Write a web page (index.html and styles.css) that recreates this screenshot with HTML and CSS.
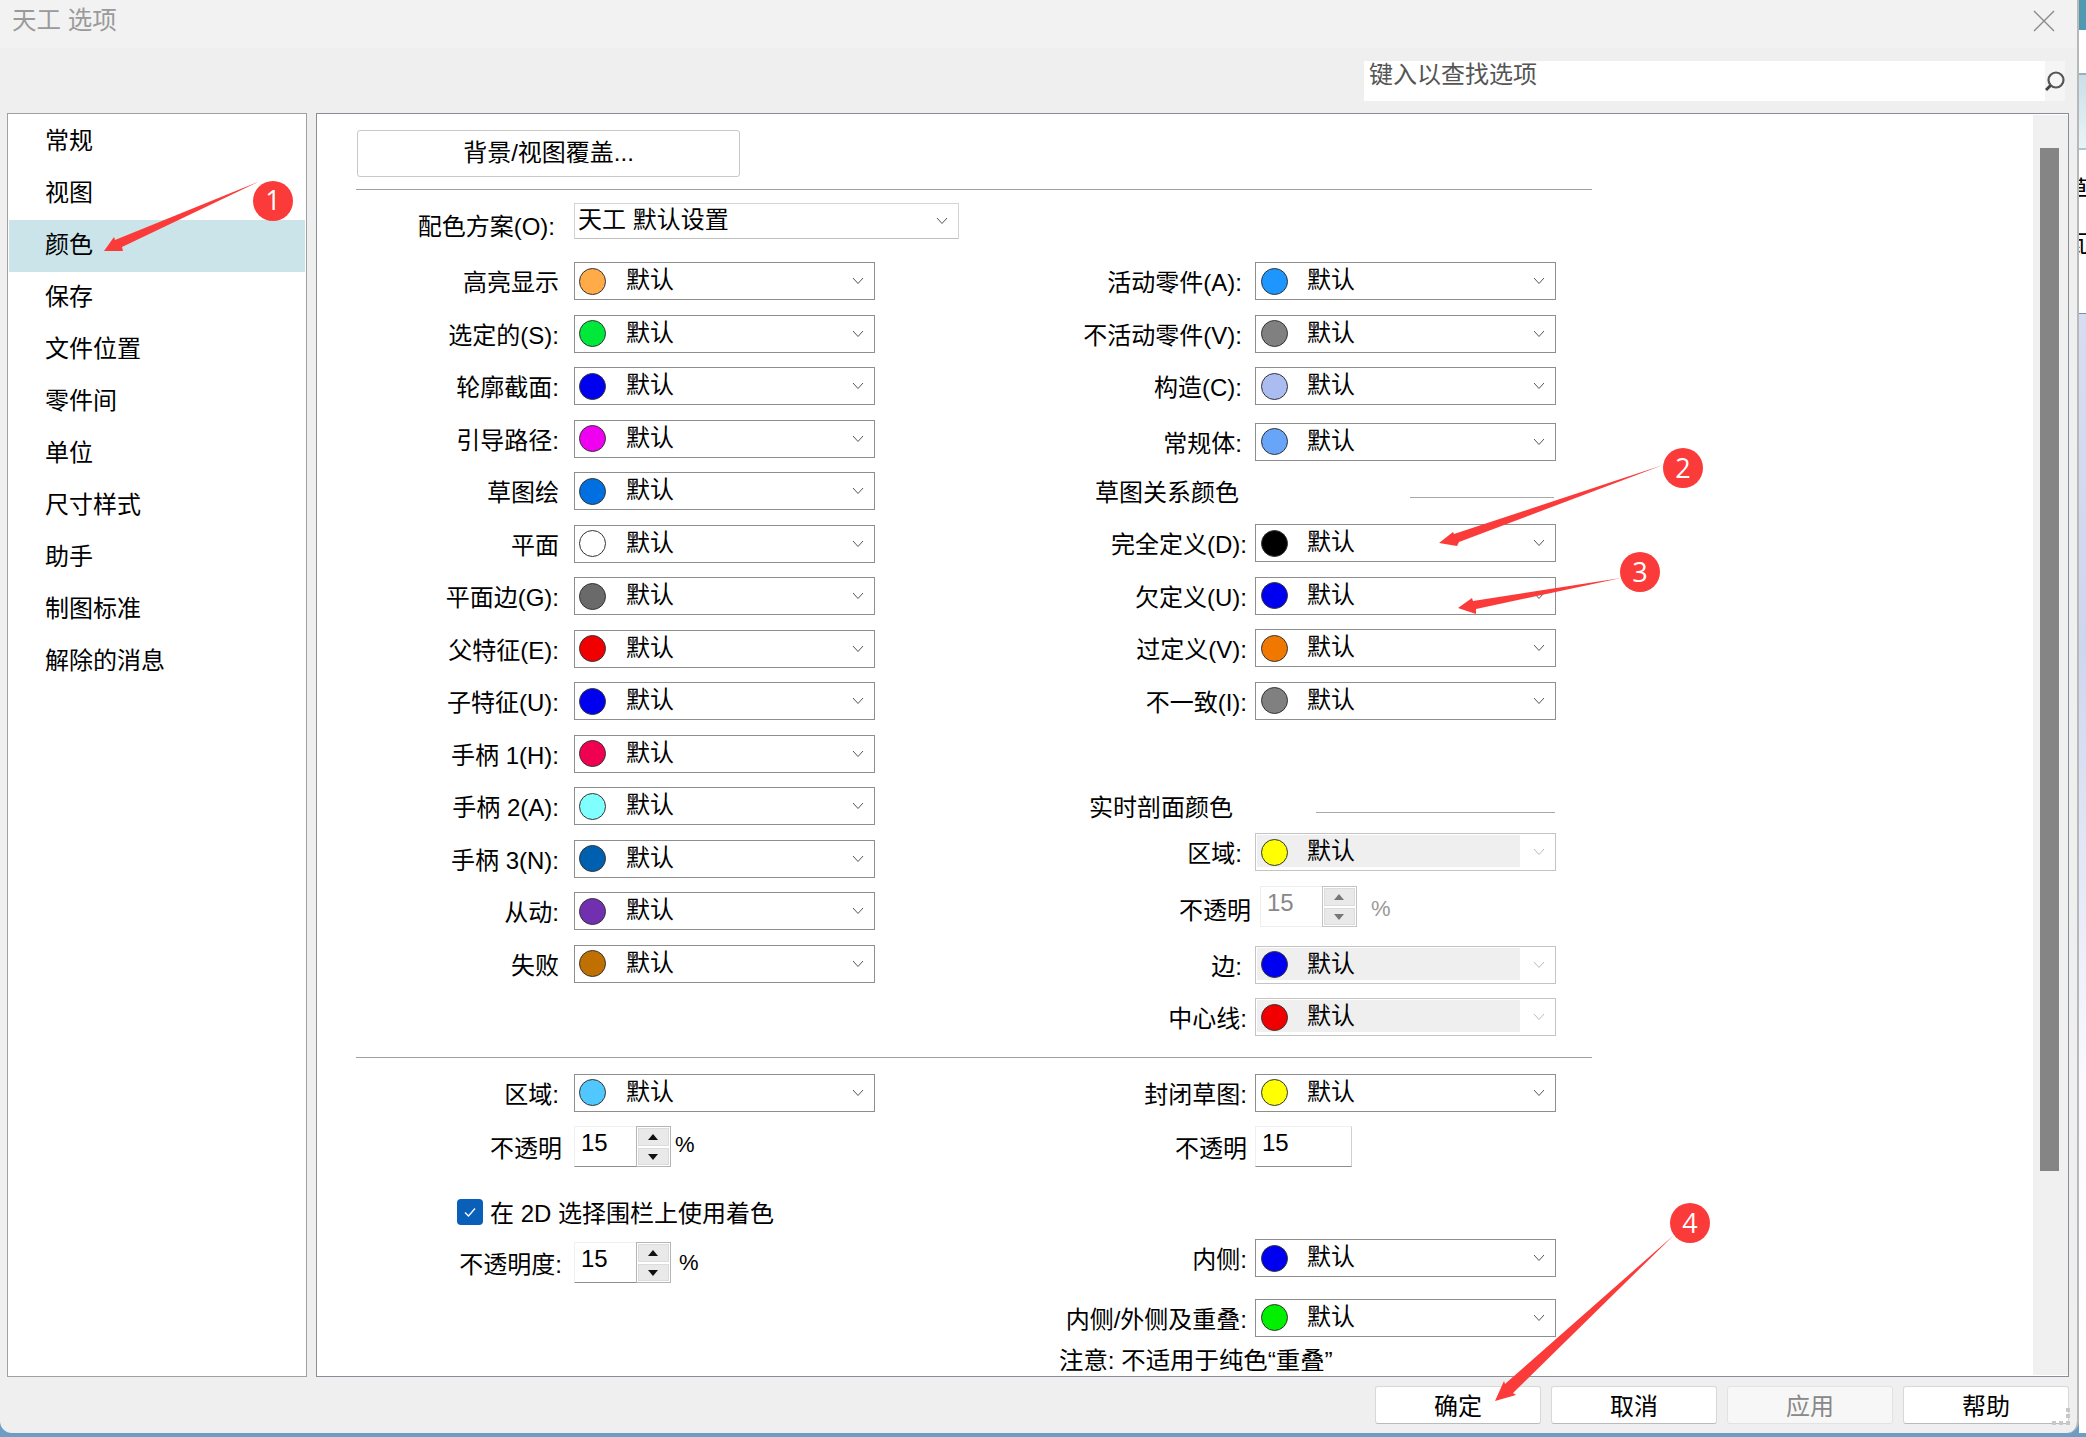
FILE: index.html
```html
<!DOCTYPE html>
<html lang="zh">
<head>
<meta charset="utf-8">
<title>天工 选项</title>
<link rel="stylesheet" href="styles.css">
</head>
<body>
<div class="desktop">
  <div class="dialog">
    <header class="titlebar">
      <span class="title">天工 选项</span>
      <svg class="close" viewBox="0 0 22 22" width="22" height="22"><path d="M1 1L21 21M21 1L1 21" stroke="#8a8a8a" stroke-width="1.4" fill="none"/></svg>
    </header>
    <div class="searchstrip">
      <div class="search">
        <span class="search-text">键入以查找选项</span>
        <span class="search-btn"><svg viewBox="0 0 20 24" width="20" height="24"><circle cx="11" cy="11" r="7.500" stroke="#555" stroke-width="2.200" fill="none"/><path d="M5.500 16.500L1 21" stroke="#444" stroke-width="3"/></svg></span>
      </div>
    </div>
    <div class="panels">
      <nav class="sidenav">
        <div class="nav-item">常规</div>
        <div class="nav-item">视图</div>
        <div class="nav-item active">颜色</div>
        <div class="nav-item">保存</div>
        <div class="nav-item">文件位置</div>
        <div class="nav-item">零件间</div>
        <div class="nav-item">单位</div>
        <div class="nav-item">尺寸样式</div>
        <div class="nav-item">助手</div>
        <div class="nav-item">制图标准</div>
        <div class="nav-item">解除的消息</div>
      </nav>
      <main class="content">
        <div class="form">
          <button class="btn-bg">背景/视图覆盖...</button>
          <hr class="rule rule-top">
          <div class="scheme-row">
            <span class="scheme-label">配色方案(O):</span>
            <div class="scheme-combo"><span>天工 默认设置</span><svg class="chev" viewBox="0 0 12 8" width="12" height="8"><path d="M1 1L6 6.500L11 1" stroke="#555" fill="none"/></svg></div>
          </div>
          <div class="cols">
            <div class="col col-left">
              <div class="row"><span class="label">高亮显示</span><div class="combo"><i class="dot" style="background:#ffab48"></i><b>默认</b><svg class="chev" viewBox="0 0 12 8" width="12" height="8"><path d="M1 1L6 6.500L11 1" stroke="#555" fill="none"/></svg></div></div>
              <div class="row"><span class="label">选定的(S):</span><div class="combo"><i class="dot" style="background:#00e83a"></i><b>默认</b><svg class="chev" viewBox="0 0 12 8" width="12" height="8"><path d="M1 1L6 6.500L11 1" stroke="#555" fill="none"/></svg></div></div>
              <div class="row"><span class="label">轮廓截面:</span><div class="combo"><i class="dot" style="background:#0000f0"></i><b>默认</b><svg class="chev" viewBox="0 0 12 8" width="12" height="8"><path d="M1 1L6 6.500L11 1" stroke="#555" fill="none"/></svg></div></div>
              <div class="row"><span class="label">引导路径:</span><div class="combo"><i class="dot" style="background:#f000f0"></i><b>默认</b><svg class="chev" viewBox="0 0 12 8" width="12" height="8"><path d="M1 1L6 6.500L11 1" stroke="#555" fill="none"/></svg></div></div>
              <div class="row"><span class="label">草图绘</span><div class="combo"><i class="dot" style="background:#0070e0"></i><b>默认</b><svg class="chev" viewBox="0 0 12 8" width="12" height="8"><path d="M1 1L6 6.500L11 1" stroke="#555" fill="none"/></svg></div></div>
              <div class="row"><span class="label">平面</span><div class="combo"><i class="dot" style="background:#ffffff"></i><b>默认</b><svg class="chev" viewBox="0 0 12 8" width="12" height="8"><path d="M1 1L6 6.500L11 1" stroke="#555" fill="none"/></svg></div></div>
              <div class="row"><span class="label">平面边(G):</span><div class="combo"><i class="dot" style="background:#6a6a6a"></i><b>默认</b><svg class="chev" viewBox="0 0 12 8" width="12" height="8"><path d="M1 1L6 6.500L11 1" stroke="#555" fill="none"/></svg></div></div>
              <div class="row"><span class="label">父特征(E):</span><div class="combo"><i class="dot" style="background:#f00000"></i><b>默认</b><svg class="chev" viewBox="0 0 12 8" width="12" height="8"><path d="M1 1L6 6.500L11 1" stroke="#555" fill="none"/></svg></div></div>
              <div class="row"><span class="label">子特征(U):</span><div class="combo"><i class="dot" style="background:#0000f0"></i><b>默认</b><svg class="chev" viewBox="0 0 12 8" width="12" height="8"><path d="M1 1L6 6.500L11 1" stroke="#555" fill="none"/></svg></div></div>
              <div class="row"><span class="label">手柄 1(H):</span><div class="combo"><i class="dot" style="background:#f00050"></i><b>默认</b><svg class="chev" viewBox="0 0 12 8" width="12" height="8"><path d="M1 1L6 6.500L11 1" stroke="#555" fill="none"/></svg></div></div>
              <div class="row"><span class="label">手柄 2(A):</span><div class="combo"><i class="dot" style="background:#80ffff"></i><b>默认</b><svg class="chev" viewBox="0 0 12 8" width="12" height="8"><path d="M1 1L6 6.500L11 1" stroke="#555" fill="none"/></svg></div></div>
              <div class="row"><span class="label">手柄 3(N):</span><div class="combo"><i class="dot" style="background:#0060b0"></i><b>默认</b><svg class="chev" viewBox="0 0 12 8" width="12" height="8"><path d="M1 1L6 6.500L11 1" stroke="#555" fill="none"/></svg></div></div>
              <div class="row"><span class="label">从动:</span><div class="combo"><i class="dot" style="background:#7030b0"></i><b>默认</b><svg class="chev" viewBox="0 0 12 8" width="12" height="8"><path d="M1 1L6 6.500L11 1" stroke="#555" fill="none"/></svg></div></div>
              <div class="row"><span class="label">失败</span><div class="combo"><i class="dot" style="background:#c07000"></i><b>默认</b><svg class="chev" viewBox="0 0 12 8" width="12" height="8"><path d="M1 1L6 6.500L11 1" stroke="#555" fill="none"/></svg></div></div>
            </div>
            <div class="col col-right">
              <div class="row"><span class="label">活动零件(A):</span><div class="combo"><i class="dot" style="background:#1e96ff"></i><b>默认</b><svg class="chev" viewBox="0 0 12 8" width="12" height="8"><path d="M1 1L6 6.500L11 1" stroke="#555" fill="none"/></svg></div></div>
              <div class="row"><span class="label">不活动零件(V):</span><div class="combo"><i class="dot" style="background:#808080"></i><b>默认</b><svg class="chev" viewBox="0 0 12 8" width="12" height="8"><path d="M1 1L6 6.500L11 1" stroke="#555" fill="none"/></svg></div></div>
              <div class="row"><span class="label">构造(C):</span><div class="combo"><i class="dot" style="background:#abbcf0"></i><b>默认</b><svg class="chev" viewBox="0 0 12 8" width="12" height="8"><path d="M1 1L6 6.500L11 1" stroke="#555" fill="none"/></svg></div></div>
              <div class="row row-solid"><span class="label">常规体:</span><div class="combo"><i class="dot" style="background:#68a4f8"></i><b>默认</b><svg class="chev" viewBox="0 0 12 8" width="12" height="8"><path d="M1 1L6 6.500L11 1" stroke="#555" fill="none"/></svg></div></div>
              <div class="section section-sketch"><span class="section-title">草图关系颜色</span><span class="section-line"></span></div>
              <div class="row"><span class="label label-wide">完全定义(D):</span><div class="combo"><i class="dot" style="background:#000"></i><b>默认</b><svg class="chev" viewBox="0 0 12 8" width="12" height="8"><path d="M1 1L6 6.500L11 1" stroke="#555" fill="none"/></svg></div></div>
              <div class="row"><span class="label label-wide">欠定义(U):</span><div class="combo"><i class="dot" style="background:#0000f0"></i><b>默认</b><svg class="chev" viewBox="0 0 12 8" width="12" height="8"><path d="M1 1L6 6.500L11 1" stroke="#555" fill="none"/></svg></div></div>
              <div class="row"><span class="label label-wide">过定义(V):</span><div class="combo"><i class="dot" style="background:#f07800"></i><b>默认</b><svg class="chev" viewBox="0 0 12 8" width="12" height="8"><path d="M1 1L6 6.500L11 1" stroke="#555" fill="none"/></svg></div></div>
              <div class="row"><span class="label label-wide">不一致(I):</span><div class="combo"><i class="dot" style="background:#808080"></i><b>默认</b><svg class="chev" viewBox="0 0 12 8" width="12" height="8"><path d="M1 1L6 6.500L11 1" stroke="#555" fill="none"/></svg></div></div>
              <div class="section section-live"><span class="section-title">实时剖面颜色</span><span class="section-line"></span></div>
              <div class="row"><span class="label">区域:</span><div class="combo off"><i class="dot" style="background:#ffff00"></i><b>默认</b><svg class="chev" viewBox="0 0 12 8" width="12" height="8"><path d="M1 1L6 6.500L11 1" stroke="#bbb" fill="none"/></svg></div></div>
              <div class="row row-spin-off"><span class="label label-wider">不透明</span><div class="spin spin-off"><span class="spin-val">15</span><span class="spin-btns"><span class="up"></span><span class="down"></span></span></div><span class="pct pct-off">%</span></div>
              <div class="row"><span class="label">边:</span><div class="combo off"><i class="dot" style="background:#0000f0"></i><b>默认</b><svg class="chev" viewBox="0 0 12 8" width="12" height="8"><path d="M1 1L6 6.500L11 1" stroke="#bbb" fill="none"/></svg></div></div>
              <div class="row"><span class="label label-wide">中心线:</span><div class="combo off"><i class="dot" style="background:#f00000"></i><b>默认</b><svg class="chev" viewBox="0 0 12 8" width="12" height="8"><path d="M1 1L6 6.500L11 1" stroke="#bbb" fill="none"/></svg></div></div>
            </div>
          </div>
          <hr class="rule rule-mid">
          <div class="cols cols-bottom">
            <div class="col col-left">
              <div class="row"><span class="label">区域:</span><div class="combo"><i class="dot" style="background:#50c8ff"></i><b>默认</b><svg class="chev" viewBox="0 0 12 8" width="12" height="8"><path d="M1 1L6 6.500L11 1" stroke="#555" fill="none"/></svg></div></div>
              <div class="row row-spin"><span class="label label-wider">不透明</span><div class="spin"><span class="spin-val">15</span><span class="spin-btns"><span class="up"></span><span class="down"></span></span></div><span class="pct pct-near">%</span></div>
              <label class="check"><span class="box"><svg viewBox="0 0 16 16" width="16" height="16"><path d="M3 8.500L6.500 12L13 4.500" stroke="#fff" stroke-width="1.300" fill="none"/></svg></span>在 2D 选择围栏上使用着色</label>
              <div class="row row-spin row-spin2"><span class="label label-wider">不透明度:</span><div class="spin"><span class="spin-val">15</span><span class="spin-btns"><span class="up"></span><span class="down"></span></span></div><span class="pct">%</span></div>
            </div>
            <div class="col col-right">
              <div class="row"><span class="label label-wide">封闭草图:</span><div class="combo"><i class="dot" style="background:#ffff00"></i><b>默认</b><svg class="chev" viewBox="0 0 12 8" width="12" height="8"><path d="M1 1L6 6.500L11 1" stroke="#555" fill="none"/></svg></div></div>
              <div class="row row-spin"><span class="label label-wide">不透明</span><div class="plain-field"><span class="spin-val">15</span></div></div>
              <div class="row row-inner"><span class="label label-wide">内侧:</span><div class="combo"><i class="dot" style="background:#0000f0"></i><b>默认</b><svg class="chev" viewBox="0 0 12 8" width="12" height="8"><path d="M1 1L6 6.500L11 1" stroke="#555" fill="none"/></svg></div></div>
              <div class="row row-overlap"><span class="label label-wide">内侧/外侧及重叠:</span><div class="combo"><i class="dot" style="background:#00f000"></i><b>默认</b><svg class="chev" viewBox="0 0 12 8" width="12" height="8"><path d="M1 1L6 6.500L11 1" stroke="#555" fill="none"/></svg></div></div>
              <div class="note">注意: 不适用于纯色“重叠”</div>
            </div>
          </div>
        </div>
        <div class="scrollbar"><div class="thumb"></div></div>
      </main>
    </div>
    <footer class="footer">
      <button class="btn">确定</button>
      <button class="btn">取消</button>
      <button class="btn disabled">应用</button>
      <button class="btn">帮助</button>
    </footer>
    <svg class="grip" viewBox="0 0 22 22" width="22" height="22"><path d="M14 0h4v4h-4zM14 6h4v4h-4zM14 13h4v4h-4zM7 13h4v4H7zM0 13h4v4H0z" fill="#c8c8c8"/></svg>
  </div>
  <aside class="backdrop">
    <div class="bd-teal"></div>
    <div class="bd-white bd-a"></div>
    <div class="bd-curve"></div>
    <div class="bd-text">草<br>瓦</div>
    <div class="bd-lav"></div>
  </aside>
</div>
<svg class="marks" viewBox="0 0 2086 1437" width="2086" height="1437">
  <g fill="#fb3a3a">
    <path d="M258 182L122 247L123 251L104 251L114 237L115 240Z"/>
    <path d="M1663 465L1459 542L1457 546L1439 543L1453 532L1454 534Z"/>
    <path d="M1621 578L1476 609L1476 614L1458 608L1472 598L1473 601Z"/>
    <path d="M1674 1235L1513 1393L1516 1395L1495 1401L1504 1381L1505 1384Z"/>
    <circle cx="273" cy="201" r="20"/>
    <circle cx="1683" cy="468" r="20"/>
    <circle cx="1640" cy="572" r="20"/>
    <circle cx="1690" cy="1223" r="20"/>
  </g>
  <g class="mark-num" fill="#fff" text-anchor="middle">
    <text x="273" y="210">1</text>
    <text x="1683" y="478">2</text>
    <text x="1640" y="582">3</text>
    <text x="1690" y="1233">4</text>
  </g>
</svg>
</body>
</html>
```

FILE: styles.css
```css
* { box-sizing: border-box; }
html, body { margin: 0; padding: 0; height: 100%; overflow: hidden; }
body { width: 2086px; height: 1437px; position: relative; background: #6d9cc4; font-family: "Liberation Sans", "Noto Sans CJK SC", sans-serif; font-size: 24px; color: #000; }
.desktop { display: flex; width: 2086px; height: 1437px; }
.dialog { width: 2079px; height: 1433px; background: #efefef; border-right: 2px solid #b8b8b8; border-radius: 0 0 12px 12px; display: flex; flex-direction: column; flex: none; position: relative; }
.titlebar { height: 48px; background: #f2f2f2; display: flex; align-items: center; justify-content: space-between; padding: 0 22px 6px 12px; flex: none; }
.title { color: #9a9a9a; font-size: 24.5px; line-height: 30px; }
.close { display: block; }
.searchstrip { height: 65px; flex: none; display: flex; justify-content: flex-end; padding: 13px 12px 0 0; }
.search { width: 701px; height: 40px; background: #fff; display: flex; justify-content: space-between; }
.search-text { color: #555; line-height: 27px; padding-left: 5px; }
.search-btn { width: 20px; background: #f5f5f5; padding-top: 8px; display: block; }
.search-btn svg { display: block; }
.panels { height: 1264px; display: flex; padding-left: 7px; flex: none; }
.sidenav { width: 300px; background: #fff; border: 1px solid #a0a0a0; padding: 2px 1px; flex: none; }
.nav-item { height: 52px; line-height: 49px; padding-left: 36px; }
.nav-item.active { background: #cbe4ea; }
.content { width: 1753px; margin-left: 9px; background: #fff; border: 1px solid #888e96; display: flex; flex: none; position: relative; padding-left: 39px; }
.form { width: 1236px; padding-top: 16px; flex: none; }
.btn-bg { display: block; width: 383px; height: 47px; margin-left: 1px; background: #fff; border: 1px solid #c8c8c8; border-radius: 3px; font: inherit; color: #000; padding: 0 0 6px; }
.rule { border: 0; height: 1px; background: #a0a0a0; margin: 0; width: 1236px; }
.rule-top { margin-top: 12px; }
.scheme-row { display: flex; align-items: flex-start; height: 59px; margin-top: 13px; }
.scheme-label { width: 199px; flex: none; text-align: right; padding-top: 5px; line-height: 38px; white-space: nowrap; }
.scheme-combo { margin-left: 19px; width: 385px; height: 36px; border: 1px solid #d4d4d4; border-bottom-color: #c0c0c0; display: flex; align-items: center; justify-content: space-between; padding: 0 10px 0 3px; line-height: 30px; flex: none; }
.scheme-combo span { margin-top: -2px; white-space: nowrap; }
.cols { display: flex; }
.cols-bottom { padding-top: 16px; }
.col-left { width: 550px; flex: none; }
.col-right { width: 686px; flex: none; }
.row { display: flex; align-items: center; height: 52.5px; padding-bottom: 14px; }
.label { text-align: right; white-space: nowrap; line-height: 38px; flex: none; position: relative; top: 2px; }
.col-left .label { width: 203px; }
.col-right .label { width: 336px; }
.col-right .label-wide { width: 341px; }
.col-right .label-wider { width: 345px; }
.col-left .label-wider { width: 206px; }
.combo { width: 301px; height: 38px; border: 1px solid #8e8e8e; display: flex; align-items: center; background: #fff; flex: none; position: relative; margin-left: 15px; padding-left: 4px; }
.col-right .combo { margin-left: 13px; padding-left: 5px; }
.col-right .label-wide + .combo { margin-left: 8px; }
.col-left .label-wider + .spin { margin-left: 12px; }
.combo b { font-weight: 400; margin-left: 20px; line-height: 30px; position: relative; top: -1px; }
.col-right .combo b { margin-left: 19px; }
.combo .chev { position: absolute; right: 10px; top: 14px; }
.chev { display: block; flex: none; }
.dot { display: block; width: 27px; height: 27px; border-radius: 50%; border: 1px solid #333; flex: none; position: relative; }
.combo.off { border-color: #c4c4c4; }
.combo.off::before { content: ""; position: absolute; left: 1px; top: 1px; bottom: 3px; width: 263px; background: #efefef; }
.spin { width: 97px; height: 41px; display: flex; border: 1px solid #f0f0f0; border-bottom-color: #8e8e8e; flex: none; margin-left: 15px; }
.spin-val { font-size: 24px; flex: 1; padding-left: 6px; line-height: 32px; display: block; }
.spin-btns { width: 35px; margin: -1px -1px -1px 0; display: flex; flex-direction: column; border: 1px solid #b4b4b4; padding: 1px; gap: 2px; background: #fff; flex: none; }
.spin-btns span { flex: 1; background: #e9e9e9; position: relative; box-shadow: inset 0 0 0 1px #dcdcdc; display: block; }
.spin-btns .up::after, .spin-btns .down::after { content: ""; position: absolute; left: 10px; top: 6px; border-left: 5px solid transparent; border-right: 5px solid transparent; }
.spin-btns .up::after { border-bottom: 6px solid #111; }
.spin-btns .down::after { border-top: 6px solid #111; }
.spin-off { border-color: #ededed; color: #888; margin-top: -4px; }
.col-right .label-wider + .spin-off { margin-left: 9px; }
.spin-off .spin-btns span::after { border-bottom-color: #777; border-top-color: #777; }
.spin-off .spin-btns { border-color: #c4c4c4; }
.pct { margin-left: 8px; font-size: 22px; }
.pct-near { margin-left: 4px; margin-top: -4px; }
.pct-off { color: #999; margin-left: 14px; }
.row-spin-off { height: 60px; }
.check { display: flex; align-items: center; height: 43px; margin: 9px 0 0 101px; white-space: nowrap; }
.box { width: 26px; height: 26px; border-radius: 4px; background: #0a60b8; display: flex; align-items: center; justify-content: center; margin-right: 7px; flex: none; }
.box svg { display: block; }
.plain-field { width: 97px; height: 41px; margin-left: 8px; border: 1px solid #f0f0f0; border-bottom-color: #8e8e8e; border-right-color: #d0d0d0; flex: none; }
.section { position: relative; }
.section-title { line-height: 32px; position: absolute; white-space: nowrap; }
.section-line { position: absolute; height: 1px; background: #a8a8a8; }
.section-sketch { height: 49px; }
.section-sketch .section-title { left: 189px; top: 2px; }
.section-sketch .section-line { left: 504px; width: 144px; top: 22px; }
.section-live { height: 99px; }
.section-live .section-title { left: 183px; top: 58px; }
.section-live .section-line { left: 410px; width: 239px; top: 78px; }
.row-solid { margin-top: 3px; }
.rule-mid { margin-top: 6px; }
.row-spin { height: 55px; }
.row-spin2 { margin-top: 9px; }
.row-inner { margin-top: 58px; }
.row-overlap { margin-top: 7px; }
.note { line-height: 32px; margin: -6px 0 0 153px; font-size: 24.4px; }
.scrollbar { position: absolute; right: 0; top: 1px; bottom: 1px; width: 35px; background: #f0f0f0; }
.thumb { position: absolute; left: 7px; top: 33px; width: 19px; height: 1023px; background: #858585; }
.footer { flex: 1; display: flex; gap: 10px; padding: 9px 0 0 1375px; }
.btn { width: 166px; height: 38px; border: 1px solid #d8d8d8; border-bottom-color: #bbb; border-radius: 3px; background: #fff; font: inherit; padding: 0 0 4px; color: #000; }
.btn.disabled { background: #f7f7f7; color: #888; border-color: #e2e2e2; }
.grip { position: absolute; right: 3px; bottom: 3px; }
.backdrop { flex: 1; background: #fff; overflow: hidden; min-width: 0; height: 1433px; }
.bd-teal { height: 30px; background: #4f9ab0; }
.bd-a { height: 45px; background: #fff; border-bottom: 2px solid #9ab0c0; }
.bd-curve { height: 75px; background: linear-gradient(#c9dfe8, #eaf4f7); border-bottom: 2px solid #a9c8d6; }
.bd-text { height: 163px; padding-top: 13px; line-height: 54px; font-size: 24px; margin-left: -14px; white-space: nowrap; }
.bd-lav { height: 1118px; border-top: 1px solid #6d8fc0; background: linear-gradient(#d8dcf0, #ced6ee 30%, #fbfbff 70%, #fff); }
.marks { position: absolute; left: 0; top: 0; pointer-events: none; }
.mark-num { font-family: "Open Sans", "Liberation Sans", sans-serif; font-size: 27px; }
```
